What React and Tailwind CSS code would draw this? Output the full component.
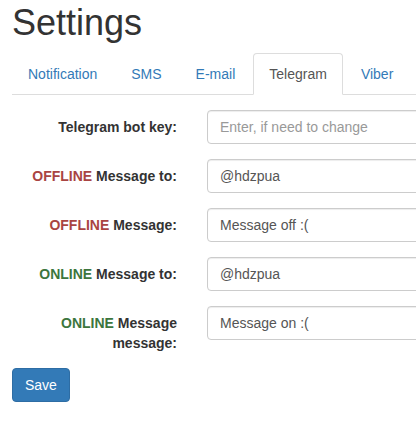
const tabs = ['Notification', 'SMS', 'E-mail', 'Telegram', 'Viber']

const rows = [
  { label: <>Telegram bot key:</>, placeholder: 'Enter, if need to change' },
  { label: <><span className="text-[#a94442]">OFFLINE</span> Message to:</>, value: '@hdzpua' },
  { label: <><span className="text-[#a94442]">OFFLINE</span> Message:</>, value: 'Message off :(' },
  { label: <><span className="text-[#3c763d]">ONLINE</span> Message to:</>, value: '@hdzpua' },
  { label: <><span className="text-[#3c763d]">ONLINE</span> Message message:</>, value: 'Message on :(' },
]

export default function App() {
  return (
    <div
      className="w-[416px] h-[429px] overflow-hidden bg-white text-[14px] leading-[20px] text-[#333] px-[12px]"
      style={{ fontFamily: '"Liberation Sans", Arial, sans-serif' }}
    >
      {/* Title */}
      <h1 className="text-[36px] leading-[40px] font-normal mt-[3px] mb-[10px]">Settings</h1>

      {/* Tabs */}
      <ul className="flex border-b border-[#ddd] -mr-[12px]">
        {tabs.map(t => (
          <li key={t} className="-mb-px">
            <a
              href="#"
              className={
                t === 'Telegram'
                  ? 'block mr-[2px] px-[15px] py-[10px] border border-[#ddd] border-b-transparent rounded-t-[4px] bg-white text-[#555]'
                  : 'block mr-[2px] px-[15px] py-[10px] border border-transparent rounded-t-[4px] text-[#337ab7]'
              }
            >
              {t}
            </a>
          </li>
        ))}
      </ul>

      {/* Form */}
      <form className="pt-[15px]">
        {rows.map((r, i) => (
          <div key={i} className="flex gap-[30px] mb-[15px]">
            <label className="w-[165px] shrink-0 text-right font-bold pt-[7px]">{r.label}</label>
            <input
              className="w-[260px] shrink-0 h-[34px] px-[12px] py-[6px] border border-[#ccc] rounded-[4px] text-[#555] placeholder:text-[#999] shadow-[inset_0_1px_1px_rgba(0,0,0,0.075)] outline-none"
              placeholder={r.placeholder}
              defaultValue={r.value}
            />
          </div>
        ))}
        <button
          type="button"
          className="h-[34px] px-[12px] py-[6px] bg-[#337ab7] border border-[#2e6da4] rounded-[4px] text-white"
        >
          Save
        </button>
      </form>
    </div>
  )
}
